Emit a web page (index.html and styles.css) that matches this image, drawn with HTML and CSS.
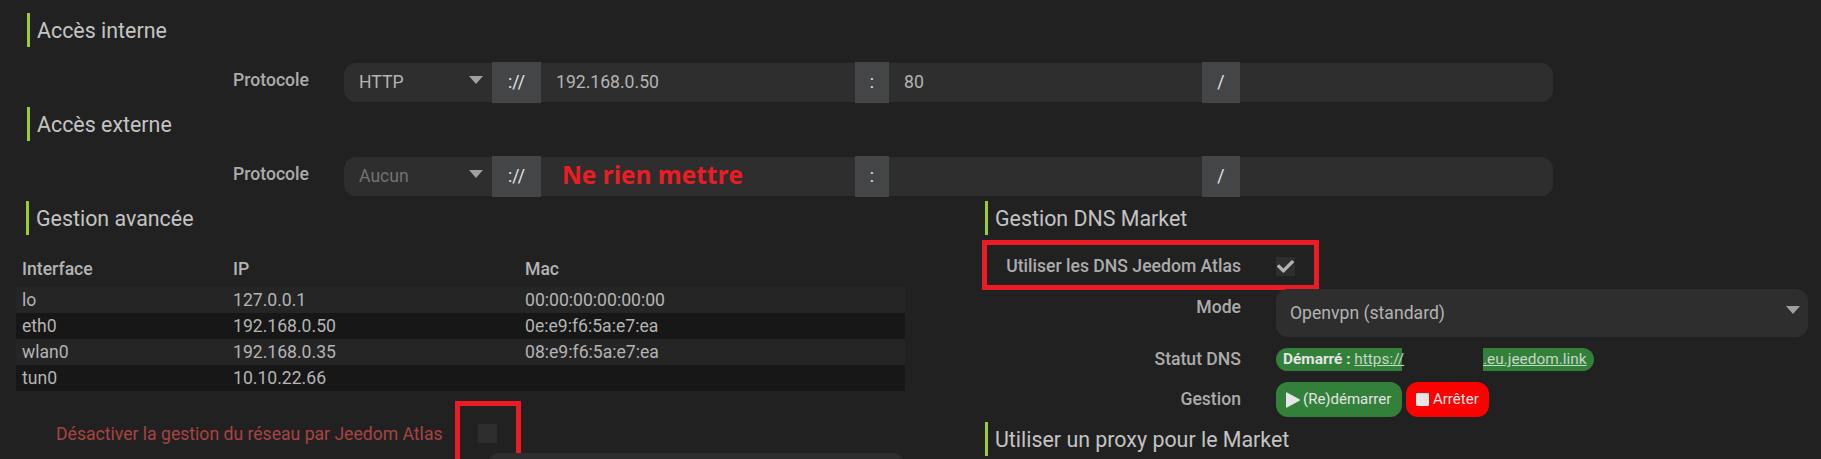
FILE: index.html
```html
<!DOCTYPE html>
<html lang="fr">
<head>
  <meta charset="UTF-8">
  <meta name="viewport" content="width=device-width, initial-scale=1.0">
  <title>Configuration réseau</title>
  <link rel="stylesheet" href="styles.css">
</head>
<body>
<div class="page">
  <h3 class="legend">Accès interne</h3>
  <div class="form-row url-row">
    <span class="label">Protocole</span>
    <div class="url-group">
      <div class="select-box url-proto">HTTP</div>
      <span class="addon addon-proto">://</span>
      <div class="url-input url-host">192.168.0.50</div>
      <span class="addon addon-port">:</span>
      <div class="url-input url-port">80</div>
      <span class="addon addon-path">/</span>
      <div class="url-input url-path"></div>
    </div>
  </div>

  <h3 class="legend">Accès externe</h3>
  <div class="form-row url-row">
    <span class="label">Protocole</span>
    <div class="url-group">
      <div class="select-box url-proto is-disabled">Aucun</div>
      <span class="addon addon-proto">://</span>
      <div class="url-input url-host"><span class="note">Ne rien mettre</span></div>
      <span class="addon addon-port">:</span>
      <div class="url-input url-port"></div>
      <span class="addon addon-path">/</span>
      <div class="url-input url-path"></div>
    </div>
  </div>

  <div class="columns">
    <div class="col-left">
      <h3 class="legend">Gestion avancée</h3>
      <table class="iface-table">
        <thead>
          <tr><th>Interface</th><th>IP</th><th>Mac</th></tr>
        </thead>
        <tbody>
          <tr><td>lo</td><td>127.0.0.1</td><td>00:00:00:00:00:00</td></tr>
          <tr><td>eth0</td><td>192.168.0.50</td><td>0e:e9:f6:5a:e7:ea</td></tr>
          <tr><td>wlan0</td><td>192.168.0.35</td><td>08:e9:f6:5a:e7:ea</td></tr>
          <tr><td>tun0</td><td>10.10.22.66</td><td></td></tr>
        </tbody>
      </table>
      <div class="disable-row">
        <span class="disable-label">Désactiver la gestion du réseau par Jeedom Atlas</span>
        <span class="checkbox"></span>
        <span class="red-box red-box-disable"></span>
      </div>
      <div class="select-box cut-select"></div>
    </div>

    <div class="col-right">
      <h3 class="legend">Gestion DNS Market</h3>
      <div class="form-row dns-check">
        <span class="label">Utiliser les DNS Jeedom Atlas</span>
        <span class="checkbox">
          <svg class="check-icon" viewBox="0 0 512 512"><path d="M173.900 439.400 7.500 273c-10-10-10-26.200 0-36.200l36.200-36.200c10-10 26.200-10 36.200 0L192 312.700 432.100 72.600c10-10 26.200-10 36.200 0l36.200 36.200c10 10 10 26.200 0 36.200L210.100 439.400c-10 10-26.200 10-36.200 0z"/></svg>
        </span>
        <span class="red-box red-box-dns"></span>
      </div>
      <div class="form-row mode-row">
        <span class="label">Mode</span>
        <div class="select-box mode-select">Openvpn (standard)</div>
      </div>
      <div class="form-row status-row">
        <span class="label">Statut DNS</span>
        <div class="status-pill">
          <span class="pill-part pill-start"><b>Démarré :</b> <a href="#">https://</a></span>
          <span class="pill-hidden"></span>
          <span class="pill-part pill-end"><a href="#">.eu.jeedom.link</a></span>
        </div>
      </div>
      <div class="form-row actions-row">
        <span class="label">Gestion</span>
        <div class="actions">
          <a class="btn btn-start" href="#"><svg class="btn-icon" viewBox="0 0 14 16"><path d="M1 0.500 13.500 7.300a0.800 0.800 0 0 1 0 1.400L1 15.500a0.700 0.700 0 0 1-1-0.600V1.100a0.700 0.700 0 0 1 1-0.600z"/></svg>(Re)démarrer</a>
          <a class="btn btn-stop" href="#"><span class="stop-icon"></span>Arrêter</a>
        </div>
      </div>
      <h3 class="legend">Utiliser un proxy pour le Market</h3>
    </div>
  </div>
</div>
</body>
</html>
```

FILE: styles.css
```css
html, body {
  margin: 0;
  padding: 0;
  height: 459px;
  overflow: hidden;
  background-color: #212121;
}
body {
  font-family: Roboto, sans-serif;
  font-size: 17.6px;
  color: #b4b4b4;
}
.page {
  padding: 13px 0 0 16px;
}
.legend {
  height: 34px;
  margin: 0 0 0 11px;
  padding-left: 7px;
  border-left: 3px solid #9acd32;
  font-size: 21.4px;
  font-weight: 400;
  line-height: 36px;
  color: #c4c4c4;
}
.form-row {
  display: flex;
}
.label {
  flex: none;
  font-weight: 500;
  text-align: right;
  color: #acacac;
}

/* url groups */
.url-row {
  height: 41px;
  margin: 15px 0 4px;
}
.url-row .label {
  width: 293px;
  margin-right: 35px;
  line-height: 36px;
}
.url-group {
  display: flex;
  align-items: center;
  width: 1209px;
}
.select-box {
  position: relative;
  box-sizing: border-box;
  background-color: #2e2e2e;
  border-radius: 12px;
}
.select-box::after {
  content: "";
  position: absolute;
  top: 13px;
  right: 9px;
  border-style: solid;
  border-width: 8px 7.500px 0;
  border-color: #a0a0a0 transparent transparent;
}
.url-proto {
  width: 148px;
  height: 39px;
  padding-left: 15px;
  border-radius: 12px 0 0 12px;
  line-height: 39px;
}
.is-disabled {
  color: #727272;
}
.addon {
  flex: none;
  height: 41px;
  background-color: #444547;
  color: #e4e4e4;
  line-height: 41px;
  text-align: center;
}
.addon-proto {
  width: 49px;
}
.addon-port {
  width: 34px;
}
.addon-path {
  width: 38px;
}
.url-input {
  position: relative;
  box-sizing: border-box;
  height: 39px;
  padding-left: 15px;
  background-color: #2e2e2e;
  line-height: 39px;
}
.url-host {
  width: 314px;
}
.url-port {
  width: 313px;
}
.url-path {
  flex: 1;
  border-radius: 0 12px 12px 0;
}
.note {
  position: absolute;
  top: 0;
  left: 21px;
  font-family: "Open Sans", sans-serif;
  font-size: 24.400px;
  font-weight: 700;
  line-height: 35px;
  white-space: nowrap;
  color: #ed1c24;
}

/* two columns */
.columns {
  display: flex;
  column-gap: 80px;
}
.col-left {
  width: 889px;
  flex: none;
}
.col-left .legend {
  margin-left: 10px;
}
.col-right {
  flex: none;
  width: 823px;
}
.col-right .legend {
  margin-left: 0;
}
.iface-table {
  width: 100%;
  margin-top: 20px;
  border-collapse: collapse;
  table-layout: fixed;
}
.iface-table th {
  height: 32px;
  padding: 0 0 4px 6px;
  box-sizing: border-box;
  font-weight: 500;
  text-align: left;
}
.iface-table td {
  height: 26px;
  padding: 0 0 0 6px;
}
.iface-table th:nth-child(1) {
  width: 211px;
}
.iface-table th:nth-child(2) {
  width: 292px;
}
.iface-table tbody tr {
  background-color: #252525;
}
.iface-table tbody tr:nth-child(even) {
  background-color: #171717;
}
.disable-row {
  position: relative;
  display: flex;
  align-items: center;
  height: 19px;
  margin-top: 33px;
  padding-left: 40px;
}
.disable-label {
  width: 422px;
  white-space: nowrap;
  color: #a94442;
}
.checkbox {
  display: block;
  flex: none;
  width: 19px;
  height: 19px;
  background-color: #2e2e2e;
}
.red-box {
  position: absolute;
  box-sizing: border-box;
  border: 5px solid #ed1c24;
}
.red-box-disable {
  top: -23px;
  left: 439px;
  width: 66px;
  height: 90px;
}
.cut-select {
  width: 418px;
  height: 48px;
  margin: 10px 0 0 471px;
}
.cut-select::after {
  display: none;
}

/* dns market */
.col-right .label {
  width: 256px;
  margin-right: 35px;
}
.dns-check {
  position: relative;
  height: 19px;
  margin-top: 22px;
  line-height: 19px;
}
.red-box-dns {
  top: -17px;
  left: -3px;
  width: 337px;
  height: 50px;
}
.check-icon {
  display: block;
  width: 17px;
  height: 17px;
  margin: 1px;
  fill: #b4b4b4;
}
.mode-row {
  margin-top: 13px;
}
.mode-row .label {
  line-height: 36px;
}
.mode-select {
  width: 533px;
  height: 48px;
  padding-left: 14px;
  line-height: 48px;
}
.mode-select::after {
  top: 17px;
  right: 8px;
}
.status-row {
  margin-top: 11px;
  line-height: 23px;
}
.status-pill {
  display: flex;
  height: 23px;
  color: #e4e4e4;
  font-size: 15.400px;
}
.pill-part {
  background-color: #33803b;
}
.pill-part a {
  color: #c4d8c6;
}
.pill-start {
  width: 119px;
  padding-left: 7px;
  border-radius: 12px 0 0 12px;
  white-space: nowrap;
}
.pill-hidden {
  width: 81px;
}
.pill-end {
  padding-right: 7px;
  border-radius: 0 12px 12px 0;
}
.actions-row {
  height: 35px;
  margin: 11px 0 5px;
  line-height: 35px;
}
.actions {
  display: flex;
  column-gap: 4px;
  font-size: 15px;
}
.btn {
  display: flex;
  align-items: center;
  height: 35px;
  border-radius: 12px;
  color: #e4e4e4;
  text-decoration: none;
}
.btn-start {
  width: 126px;
  padding-left: 10px;
  box-sizing: border-box;
  background-color: #33803b;
}
.btn-stop {
  width: 83px;
  padding-left: 10px;
  box-sizing: border-box;
  background-color: #ff0000;
}
.btn-icon {
  flex: none;
  width: 14px;
  height: 16px;
  margin-right: 3px;
  fill: #e6e6e6;
}
.stop-icon {
  flex: none;
  width: 13px;
  height: 13px;
  margin-right: 4px;
  border-radius: 1px;
  background-color: #e6e6e6;
}
```
